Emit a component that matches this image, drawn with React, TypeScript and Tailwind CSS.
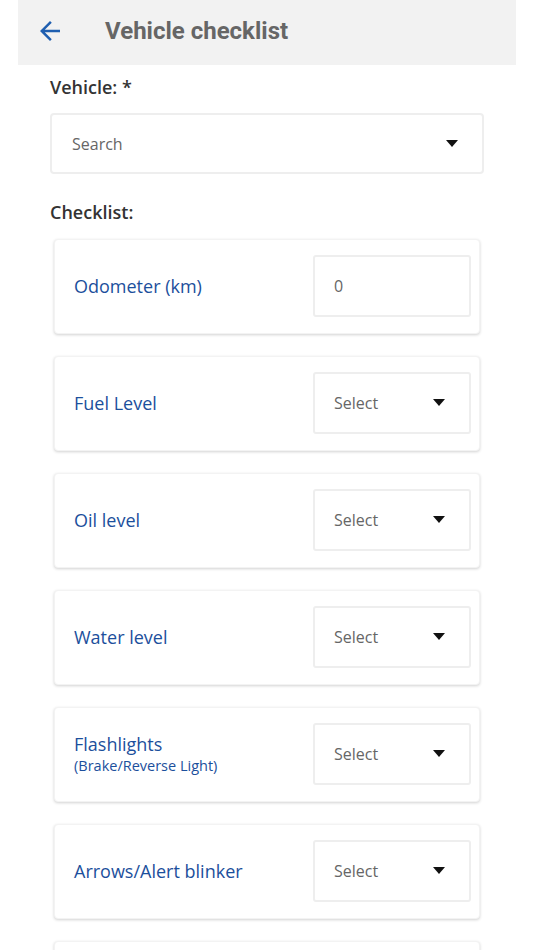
import React from "react";

const Caret = () => (
  <svg width="12" height="7" viewBox="0 0 12 7" className="shrink-0">
    <path d="M0 0 L12 0 L6 7 Z" fill="#111" />
  </svg>
);

type Item = { label: string; sub?: string; kind: "input" | "select" };

const items: Item[] = [
  { label: "Odometer (km)", kind: "input" },
  { label: "Fuel Level", kind: "select" },
  { label: "Oil level", kind: "select" },
  { label: "Water level", kind: "select" },
  { label: "Flashlights", sub: "(Brake/Reverse Light)", kind: "select" },
  { label: "Arrows/Alert blinker", kind: "select" },
];

export default function App() {
  return (
    <div
      className="w-[534px] h-[950px] overflow-hidden bg-white"
      style={{ fontFamily: '"Open Sans", "Noto Sans", sans-serif' }}
    >
      <div className="mx-[18px]">
        <div className="h-[65px] bg-[#f2f2f2] flex items-center pb-[3px]">
          <div className="w-[87px] flex items-center pl-[17px]">
            <svg width="30" height="30" viewBox="0 0 24 24">
              <path
                d="M20 11H7.83l5.59-5.59L12 4l-8 8 8 8 1.41-1.41L7.83 13H20v-2z"
                fill="#1f5fb0"
              />
            </svg>
          </div>
          <div
            className="text-[24px] font-bold text-[#666666] leading-none"
            style={{ fontFamily: "Roboto, sans-serif" }}
          >
            Vehicle checklist
          </div>
        </div>
        <div className="px-[32px]">
          <div className="mt-[10px] h-[24px] flex items-center text-[18px] font-semibold text-[#333333]">
            Vehicle: *
          </div>
          <div className="mt-[14px] h-[61px] border-2 border-[#eeeeee] rounded-[4px] flex items-center justify-between pl-[20px] pr-[24px]">
            <span className="text-[16px] text-[#666666]">Search</span>
            <Caret />
          </div>
          <div className="mt-[26px] h-[24px] flex items-center text-[18px] font-semibold text-[#333333]">
            Checklist:
          </div>
          <div className="mx-[4px] mt-[15px] flex flex-col gap-[22px]">
            {items.map((it) => (
              <div
                key={it.label}
                className="h-[95px] shrink-0 rounded-[4px] border border-[#f3f3f3] bg-white shadow-[0_1px_3px_rgba(0,0,0,0.18)] flex items-center justify-between pl-[19px] pr-[8px]"
              >
                <div className="flex flex-col text-[#1c4f9c] pb-[2px]">
                  <span className="text-[18px] leading-[24px]">{it.label}</span>
                  {it.sub && (
                    <span className="text-[14.5px] leading-[19px]">{it.sub}</span>
                  )}
                </div>
                <div className="w-[158px] h-[62px] border-2 border-[#eeeeee] rounded-[3px] flex items-center justify-between pl-[19px] pr-[24px] mb-[2px]">
                  <span className="text-[16px] text-[#666666]">
                    {it.kind === "input" ? "0" : "Select"}
                  </span>
                  {it.kind === "select" && <Caret />}
                </div>
              </div>
            ))}
            <div className="h-[95px] shrink-0 rounded-[4px] border border-[#f3f3f3] bg-white shadow-[0_1px_3px_rgba(0,0,0,0.18)]" />
          </div>
        </div>
      </div>
    </div>
  );
}
